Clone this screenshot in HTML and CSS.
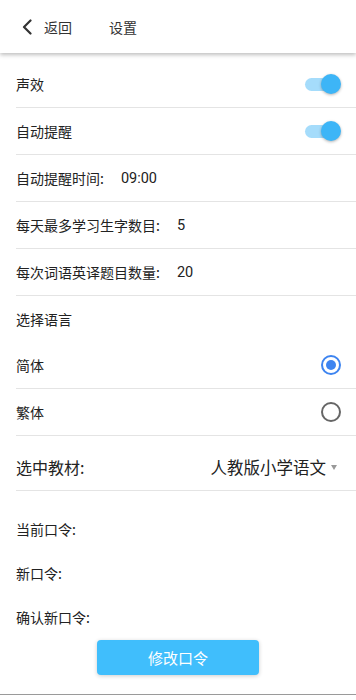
FILE: index.html
```html
<!DOCTYPE html>
<html lang="zh-CN">
<head>
<meta charset="utf-8">
<title>设置</title>
<link rel="stylesheet" href="styles.css">
</head>
<body>
<div class="page">
  <header class="topbar">
    <div class="back">
      <svg class="chev" width="10" height="16" viewBox="0 0 10 16"><path d="M8.5 1.5 L2 8 L8.5 14.5" fill="none" stroke="#333" stroke-width="2.2" stroke-linecap="round" stroke-linejoin="round"/></svg>
      <span class="back-text">返回</span>
    </div>
    <span class="title">设置</span>
  </header>

  <div class="list">
    <div class="row">
      <span class="label">声效</span>
      <span class="switch"><span class="track"></span><span class="thumb"></span></span>
    </div>
    <div class="row">
      <span class="label">自动提醒</span>
      <span class="switch"><span class="track"></span><span class="thumb"></span></span>
    </div>
    <div class="row">
      <span class="label">自动提醒时间:</span><span class="value">09:00</span>
    </div>
    <div class="row">
      <span class="label">每天最多学习生字数目:</span><span class="value">5</span>
    </div>
    <div class="row">
      <span class="label">每次词语英译题目数量:</span><span class="value">20</span>
    </div>
    <div class="row plain">
      <span class="label">选择语言</span>
    </div>
    <div class="row">
      <span class="label">简体</span>
      <span class="radio checked"></span>
    </div>
    <div class="row">
      <span class="label">繁体</span>
      <span class="radio"></span>
    </div>
    <div class="row picker">
      <span class="label big">选中教材:</span>
      <span class="select"><span class="select-text">人教版小学语文</span><span class="caret"></span></span>
    </div>
  </div>

  <div class="pwd">
    <div class="pwd-row">当前口令:</div>
    <div class="pwd-row">新口令:</div>
    <div class="pwd-row">确认新口令:</div>
    <div class="btn-wrap"><button class="btn">修改口令</button></div>
  </div>
  <div class="bottom"></div>
</div>
</body>
</html>
```

FILE: styles.css
```css
* { box-sizing: border-box; }
html, body { margin: 0; padding: 0; background: #fff; }
body {
  font-family: "Noto Sans CJK SC", "Noto Sans", sans-serif;
  color: #222;
  font-size: 14px;
}
.page { width: 356px; height: 700px; overflow: hidden; }

.topbar {
  height: 53px;
  display: flex;
  align-items: center;
  padding-left: 22px;
  background: #fff;
  box-shadow: 0 2px 4px rgba(0,0,0,0.25);
  position: relative;
  z-index: 1;
}
.back { display: flex; align-items: center; }
.chev { display: block; }
.back-text { margin-left: 12px; font-size: 14px; color: #333; }
.title { margin-left: 37px; font-size: 14px; color: #333; }

.list { margin-top: 8px; padding-left: 16px; }
.row {
  height: 47px;
  display: flex;
  align-items: center;
  border-bottom: 1px solid #e4e4e4;
  padding-right: 15px;
}
.row.plain { border-bottom: none; height: 46px; }
.label { white-space: nowrap; }
.label.big { font-size: 16px; }
.value { margin-left: 17px; font-family: "Roboto", "Noto Sans", sans-serif; font-size: 14.5px; }

.switch {
  margin-left: auto;
  position: relative;
  width: 36px;
  height: 20px;
  display: block;
}
.track {
  position: absolute;
  left: 0; top: 4px;
  width: 34px; height: 13px;
  border-radius: 7px;
  background: #a5dcfb;
}
.thumb {
  position: absolute;
  right: 0; top: 0;
  width: 20px; height: 20px;
  border-radius: 50%;
  background: #3db5f7;
  box-shadow: 0 1px 3px rgba(0,0,0,0.3);
}

.radio {
  margin-left: auto;
  width: 20px; height: 20px;
  border-radius: 50%;
  border: 2px solid #666;
  position: relative;
}
.radio.checked { border-color: #3d84f0; }
.radio.checked::after {
  content: "";
  position: absolute;
  left: 3px; top: 3px;
  width: 10px; height: 10px;
  border-radius: 50%;
  background: #3d84f0;
}

.row.picker { height: 55px; padding-top: 8px; padding-right: 19px; }
.select { margin-left: auto; display: flex; align-items: center; }
.select-text { font-size: 16.5px; color: #222; }
.caret {
  margin-left: 5px;
  width: 0; height: 0;
  border-left: 3.5px solid transparent;
  border-right: 3.5px solid transparent;
  border-top: 5px solid #999;
}

.pwd { padding: 16px 16px 0 16px; }
.pwd-row { height: 44px; display: flex; align-items: center; }
.btn-wrap { display: flex; justify-content: center; margin-top: 1px; }
.btn {
  width: 162px; height: 35px;
  border: none;
  border-radius: 4px;
  background: #40befc;
  color: #fff;
  font-family: "Noto Sans CJK SC", sans-serif;
  font-size: 15px;
  box-shadow: 0 1px 4px rgba(0,0,0,0.2);
}
.bottom { margin-top: 19px; border-top: 1px solid #9a9a9a; height: 10px; }
```
